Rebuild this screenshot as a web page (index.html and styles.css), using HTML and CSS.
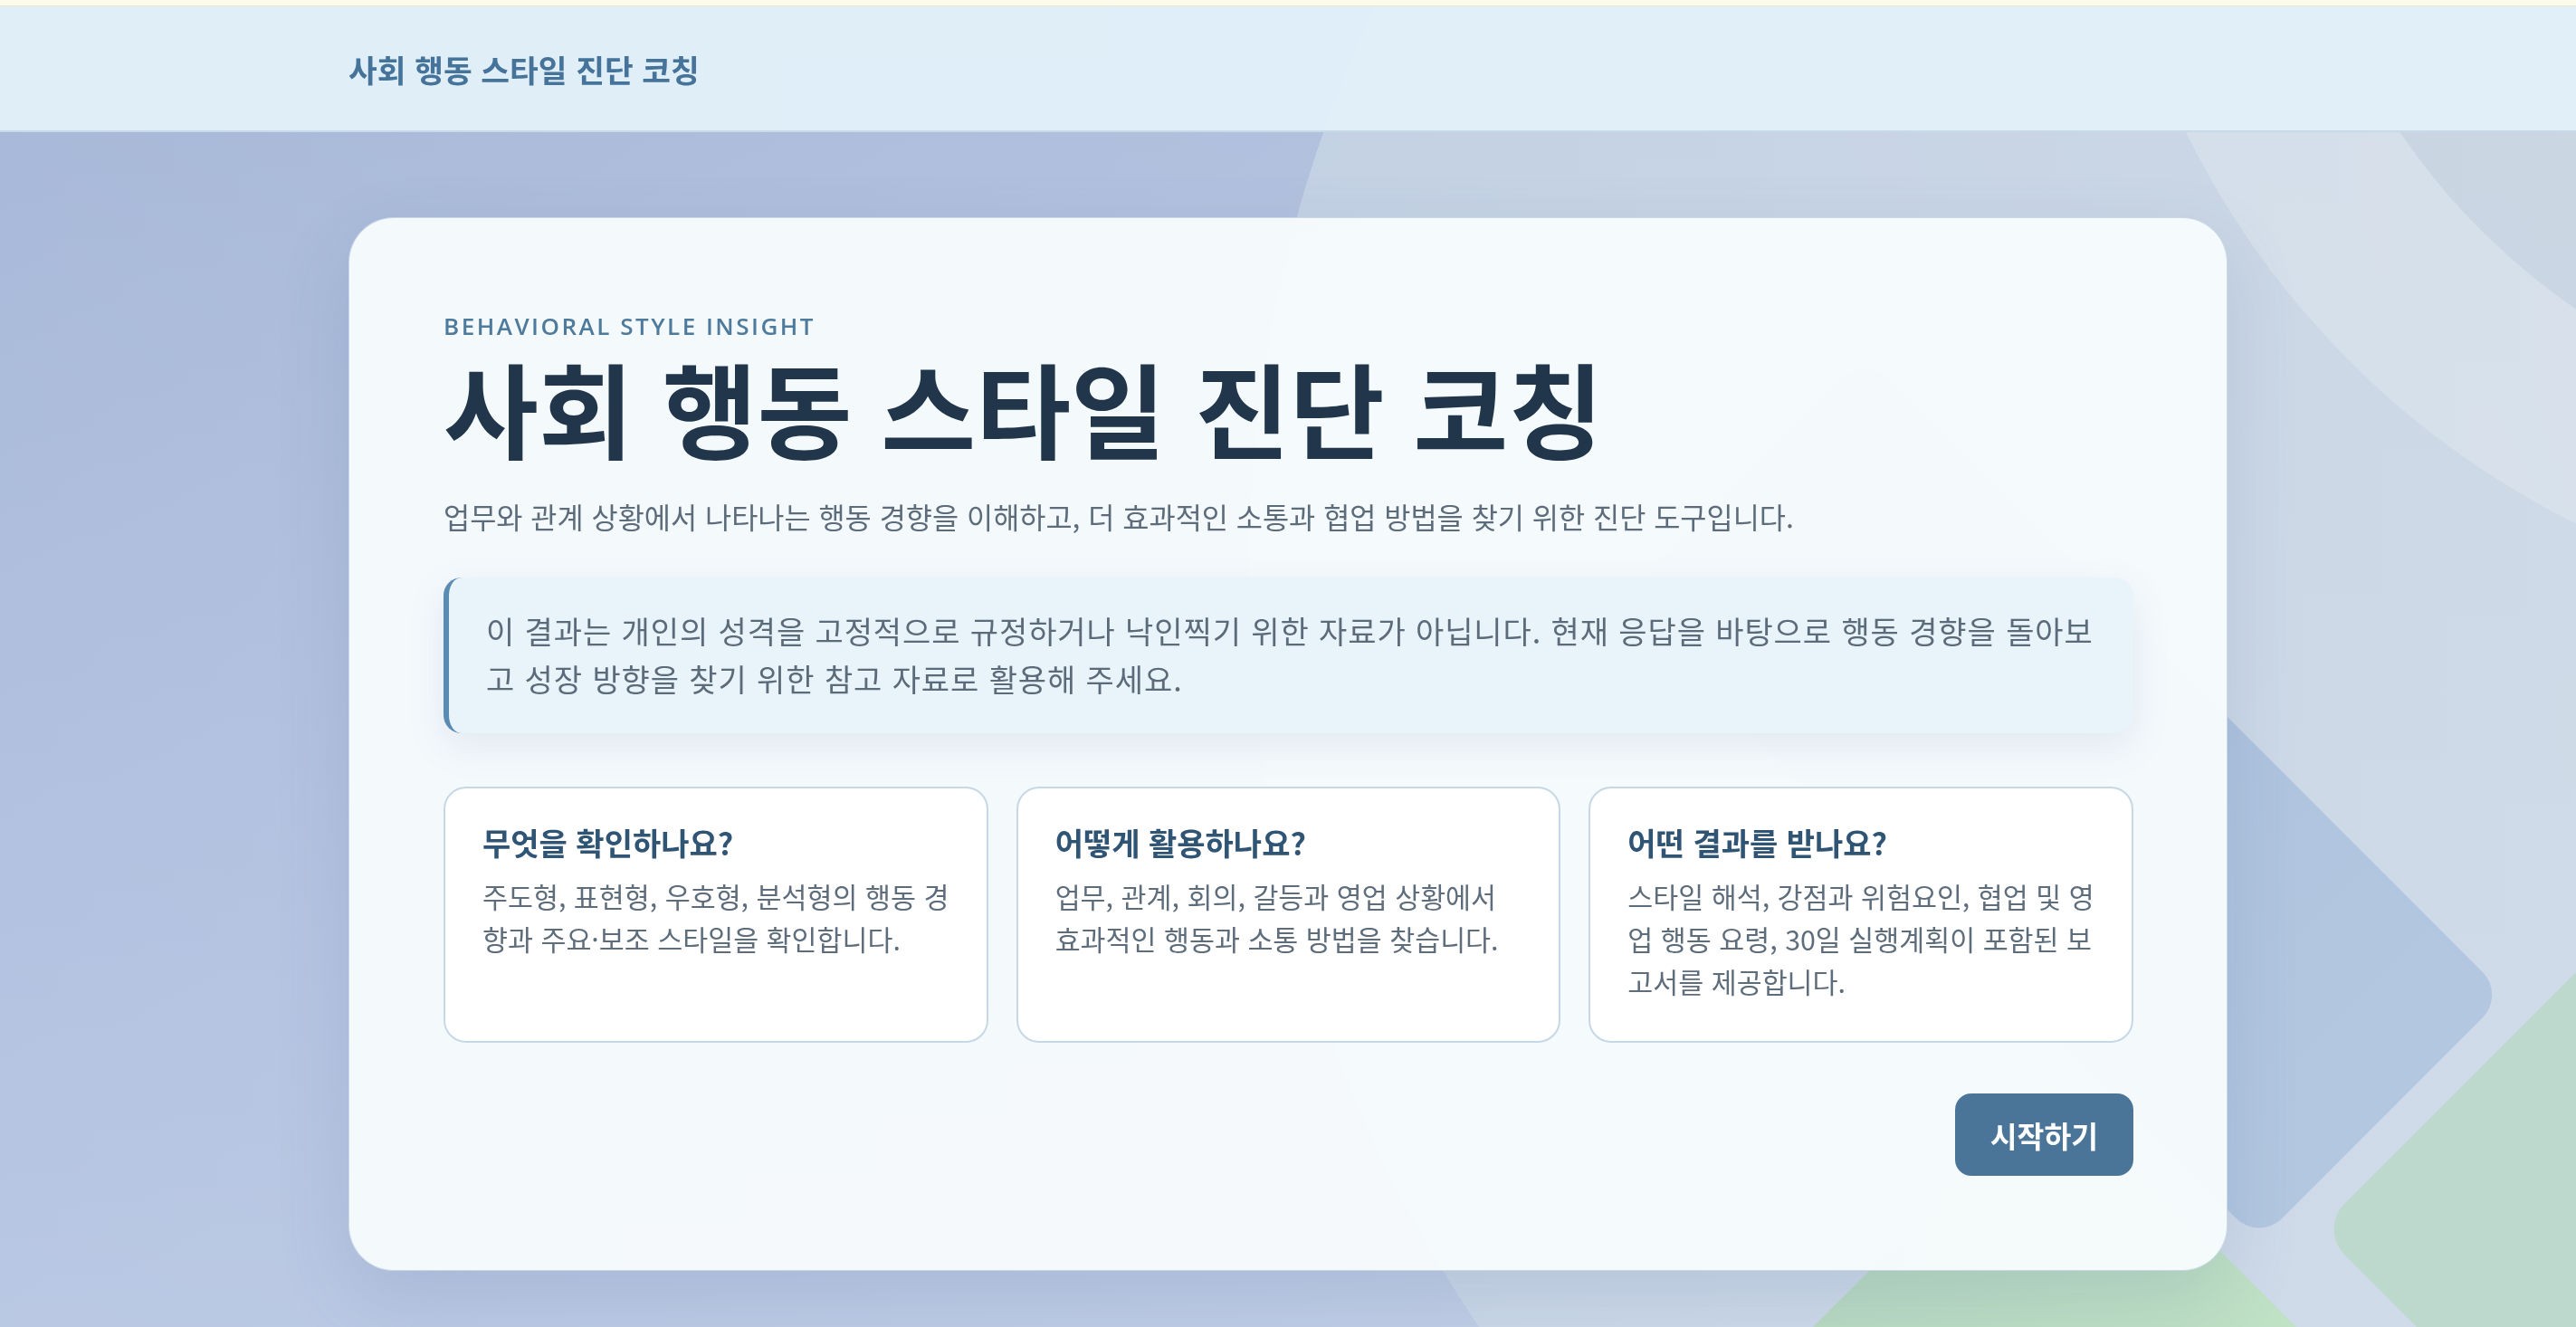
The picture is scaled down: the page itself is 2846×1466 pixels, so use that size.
FILE: index.html
```html
<!DOCTYPE html>
<html lang="ko">
<head>
<meta charset="utf-8">
<title>사회 행동 스타일 진단 코칭</title>
<link rel="stylesheet" href="styles.css">
</head>
<body>
<div class="backdrop" aria-hidden="true">
  <div class="shape shape-circle"></div>
  <div class="shape shape-ring"></div>
  <div class="shape shape-blue"></div>
  <div class="shape shape-green-right"></div>
  <div class="shape shape-green-bottom"></div>
</div>
<div class="topline"></div>
<header class="site-header">
  <div class="container">
    <span class="brand">사회 행동 스타일 진단 코칭</span>
  </div>
</header>
<main class="container page">
  <section class="hero-card">
    <p class="eyebrow">BEHAVIORAL STYLE INSIGHT</p>
    <h1 class="title">사회 행동 스타일 진단 코칭</h1>
    <p class="lead">업무와 관계 상황에서 나타나는 행동 경향을 이해하고, 더 효과적인 소통과 협업 방법을 찾기 위한 진단 도구입니다.</p>
    <div class="notice">이 결과는 개인의 성격을 고정적으로 규정하거나 낙인찍기 위한 자료가 아닙니다. 현재 응답을 바탕으로 행동 경향을 돌아보<br>고 성장 방향을 찾기 위한 참고 자료로 활용해 주세요.</div>
    <div class="features">
      <article class="feature">
        <h2>무엇을 확인하나요?</h2>
        <p>주도형, 표현형, 우호형, 분석형의 행동 경<br>향과 주요·보조 스타일을 확인합니다.</p>
      </article>
      <article class="feature">
        <h2>어떻게 활용하나요?</h2>
        <p>업무, 관계, 회의, 갈등과 영업 상황에서<br>효과적인 행동과 소통 방법을 찾습니다.</p>
      </article>
      <article class="feature">
        <h2>어떤 결과를 받나요?</h2>
        <p>스타일 해석, 강점과 위험요인, 협업 및 영<br>업 행동 요령, 30일 실행계획이 포함된 보<br>고서를 제공합니다.</p>
      </article>
    </div>
    <div class="actions">
      <button class="btn" type="button">시작하기</button>
    </div>
  </section>
</main>
</body>
</html>
```

FILE: styles.css
```css
* { box-sizing: border-box; }

html, body {
  margin: 0;
  padding: 0;
}

body {
  min-height: 100vh;
  font-family: "Noto Sans CJK KR", "Noto Sans", sans-serif;
  color: #5d6c7b;
  background:
    linear-gradient(to bottom, rgba(220, 228, 245, 0) 0%, rgba(214, 224, 244, 0.4) 100%),
    linear-gradient(90deg, #a6b7d8 0%, #b0bfdc 50%, #c4cfde 100%);
  overflow: hidden;
}

.backdrop {
  position: fixed;
  inset: 0;
  overflow: hidden;
  z-index: 0;
}

.shape {
  position: absolute;
}

.shape-circle {
  left: 1379px;
  top: -846px;
  width: 2962px;
  height: 2962px;
  border-radius: 50%;
  background: rgba(213, 225, 236, 0.5);
}

.shape-ring {
  left: 2318px;
  top: -1221px;
  width: 1898px;
  height: 1898px;
  border-radius: 50%;
  border: 205px solid rgba(228, 236, 243, 0.45);
  background: rgba(185, 200, 212, 0.15);
}

.shape-blue {
  left: 2061px;
  top: 392px;
  width: 1000px;
  height: 385px;
  transform-origin: 0 0;
  transform: rotate(45deg);
  border-radius: 36px;
  background: linear-gradient(90deg, #a9bfdb, #b3c7e0);
}

.shape-green-right {
  left: 2562px;
  top: 1358px;
  width: 900px;
  height: 900px;
  transform-origin: 0 0;
  transform: rotate(-45deg);
  border-radius: 40px;
  background: #bdd9cd;
}

.shape-green-bottom {
  left: 2270px;
  top: 1199px;
  width: 700px;
  height: 700px;
  transform-origin: 0 0;
  transform: rotate(45deg);
  background: linear-gradient(45deg, #b6d6c1, #c3e5c6);
}

.topline {
  position: relative;
  z-index: 2;
  height: 7px;
  background: #fcfaea;
  border-bottom: 1px solid #ece7cc;
}

.site-header {
  position: relative;
  z-index: 2;
  height: 139px;
  display: flex;
  align-items: center;
  background: rgba(225, 240, 249, 0.95);
  border-bottom: 2px solid #c7dae8;
}

.container {
  width: 2076px;
  margin: 0 auto;
}

.brand {
  font-size: 34.5px;
  font-weight: 700;
  color: #46739a;
}

.page {
  position: relative;
  z-index: 1;
  padding-top: 94px;
}

.hero-card {
  padding: 104px 103px 104px 104px;
  border-radius: 50px;
  background: rgba(247, 251, 253, 0.96);
  border: 1px solid rgba(190, 208, 226, 0.8);
  box-shadow: 0 30px 80px rgba(70, 100, 140, 0.16);
}

.eyebrow {
  margin: 0;
  font-family: "Open Sans", "Noto Sans", sans-serif;
  font-weight: 600;
  font-size: 26px;
  line-height: 30px;
  letter-spacing: 2.5px;
  color: #4e7a9c;
}

.title {
  margin: 0;
  font-size: 114px;
  line-height: 148px;
  font-weight: 700;
  color: #21364a;
}

.lead {
  margin: 24px 0 0;
  font-size: 31.7px;
  line-height: 47px;
  color: #5d6c7b;
}

.notice {
  margin-top: 44px;
  padding: 32px 16px 34px 41px;
  border-left: 6px solid #5a8bb2;
  border-radius: 20px;
  background: #e8f3fa;
  font-size: 34px;
  line-height: 53px;
  letter-spacing: 0.9px;
  color: #5c6b7a;
  box-shadow: 0 14px 40px rgba(90, 120, 160, 0.13);
}

.features {
  margin-top: 59px;
  display: grid;
  grid-template-columns: repeat(3, 1fr);
  gap: 31px;
}

.feature {
  background: #ffffff;
  border: 2px solid #c6d8e6;
  border-radius: 25px;
  padding: 37px 16px 42px 41px;
}

.feature h2 {
  margin: 0;
  font-size: 34px;
  line-height: 45px;
  font-weight: 700;
  color: #2f5474;
}

.feature p {
  margin: 14px 0 0;
  font-size: 30.4px;
  line-height: 47px;
  color: #5e6d7c;
}

.actions {
  display: flex;
  justify-content: flex-end;
  margin-top: 56px;
}

.btn {
  height: 91px;
  padding: 0 39px;
  border: none;
  border-radius: 18px;
  background: #4a7599;
  color: #ffffff;
  font-family: inherit;
  font-size: 32.4px;
  font-weight: 700;
  cursor: pointer;
}
```
